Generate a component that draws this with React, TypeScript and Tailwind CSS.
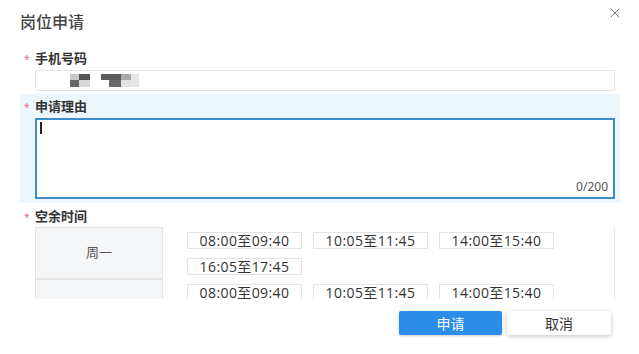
import { X } from 'lucide-react';

const rows = [
  { day: '周一', slots: ['08:00至09:40', '10:05至11:45', '14:00至15:40', '16:05至17:45'] },
  { day: '', slots: ['08:00至09:40', '10:05至11:45', '14:00至15:40'] },
];

function Label({ text }: { text: string }) {
  return (
    <div className="flex items-center h-[16px] pl-[4px]">
      <span className="w-[11px] text-[10px] leading-none text-[#e0707a]">*</span>
      <span className="text-[13px] font-bold text-[#333]">{text}</span>
    </div>
  );
}

function Mosaic() {
  return (
    <svg width="72" height="14" viewBox="0 0 72 14">
      <rect x="0" y="0" width="9" height="6" fill="#c8c8c8" />
      <rect x="9" y="0" width="11" height="6" fill="#555" />
      <rect x="0" y="6" width="9" height="7" fill="#666" />
      <rect x="9" y="6" width="11" height="7" fill="#d6d6d6" />
      <rect x="31" y="0" width="20" height="6" fill="#5a5a5a" />
      <rect x="51" y="0" width="10" height="6" fill="#aaa" />
      <rect x="39" y="6" width="12" height="7" fill="#6a6a6a" />
      <rect x="51" y="6" width="10" height="7" fill="#e2e2e2" />
      <rect x="61" y="0" width="8" height="13" fill="#e6e6e6" />
    </svg>
  );
}

export default function App() {
  return (
    <div
      className="relative w-[639px] h-[354px] overflow-hidden bg-white text-[#333]"
      style={{ fontFamily: '"Noto Sans", "Noto Sans CJK SC", sans-serif' }}
    >
      <div className="h-[46px] pl-[20px] pt-[11px] text-[16px] leading-[22px] font-medium text-[#444]">岗位申请</div>
      <button className="absolute right-[16px] top-[5px] text-[#666]">
        <X size={16} strokeWidth={1.3} />
      </button>

      <div className="pl-[20px] pr-[19px]">
        {/* phone */}
        <div className="h-[48px] pt-[5px]">
          <Label text="手机号码" />
          <div className="ml-[15px] mr-[5px] mt-[3px] h-[21px] border border-[#e6e6e6] flex items-center pl-[34px]">
            <Mosaic />
          </div>
        </div>

        {/* reason */}
        <div className="bg-[#eef6fd] h-[109px] pt-[5px]">
          <Label text="申请理由" />
          <div className="relative ml-[15px] mr-[5px] mt-[3px] h-[81px] border-2 border-[#3d8ec7] bg-white">
            <div className="ml-[3px] mt-[2px] w-[1.5px] h-[12px] bg-[#222]" />
            <span className="absolute right-[5px] bottom-[1px] text-[12px] text-[#555]">0/200</span>
          </div>
        </div>

        {/* free time */}
        <div className="pt-[6px]">
          <Label text="空余时间" />
          <div className="ml-[15px] mr-[5px] mt-[2px] h-[72px] overflow-hidden border-r border-[#e3e3e3]">
            {rows.map((r, idx) => (
              <div key={idx} className="grid grid-cols-[128px_1fr]">
                <div className="bg-[#f5f6f8] border border-[#e3e3e3] -mt-px first:mt-0 h-[52px] flex items-center justify-center text-[13px] text-[#555]">
                  {r.day}
                </div>
                <div className="pl-[24px] pt-[5px] flex flex-wrap gap-x-[11px] gap-y-[9px] content-start">
                  {r.slots.map((s, i) => (
                    <span
                      key={i}
                      className="w-[115px] h-[17px] border border-[#e3e3e3] flex items-center justify-center text-[14px] tracking-[0.4px] text-[#333]"
                      style={{ fontFamily: '"Open Sans", "Noto Sans CJK SC", sans-serif' }}
                    >
                      {s}
                    </span>
                  ))}
                </div>
              </div>
            ))}
          </div>
        </div>
      </div>

      <div className="flex justify-end gap-[5px] pr-[28px] mt-[12px]">
        <button className="w-[103px] h-[24px] bg-[#2b8de8] text-white text-[14px] rounded-[2px] shadow-[0_1px_3px_rgba(0,0,0,0.2)]">申请</button>
        <button className="w-[104px] h-[24px] bg-white text-[#333] text-[14px] rounded-[2px] shadow-[0_1px_4px_rgba(0,0,0,0.25)]">取消</button>
      </div>
    </div>
  );
}
